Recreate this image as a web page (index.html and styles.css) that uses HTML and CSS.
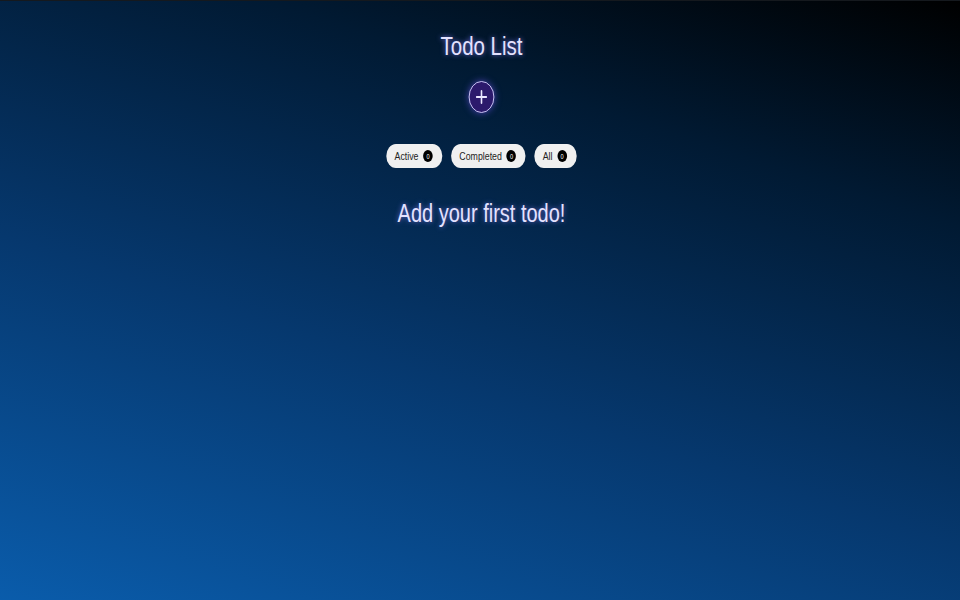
FILE: index.html
```html
<!DOCTYPE html>
<html>
<head>
<meta charset="utf-8">
<link rel="stylesheet" href="styles.css">
</head>
<body>
<main class="app">
  <h1 class="title">Todo List</h1>
  <button class="add-btn" aria-label="Add todo">
    <svg width="16" height="16" viewBox="0 0 16 16"><path d="M8 2v12M2 8h12" stroke="#eae6ff" stroke-width="2" stroke-linecap="round"/></svg>
  </button>
  <div class="filters">
    <button class="pill">Active <span class="badge">0</span></button>
    <button class="pill">Completed <span class="badge">0</span></button>
    <button class="pill">All <span class="badge">0</span></button>
  </div>
  <p class="empty">Add your first todo!</p>
</main>
</body>
</html>
```
FILE: styles.css
```css
html, body {
  margin: 0;
  height: 100%;
}
body {
  background: linear-gradient(18deg, #0a5cab 0%, #06386e 40%, #011a33 75%, #000 100%);
  font-family: "Liberation Sans", Arial, sans-serif;
  border-top: 1px solid #15191e;
  box-sizing: border-box;
}
.app {
  display: flex;
  flex-direction: column;
  align-items: center;
  padding-top: 31px;
  transform: translateX(1.5px) scaleX(0.8);
  transform-origin: center top;
}
.title {
  margin: 0;
  font-size: 25.6px;
  font-weight: normal;
  color: #e4e2ff;
  line-height: 28px;
  text-shadow: 0 0 6px rgba(140, 130, 255, 0.8);
}
.add-btn {
  margin-top: 21px;
  width: 32px;
  height: 32px;
  border-radius: 50%;
  border: 1.5px solid #d8d2ff;
  background: #2c1a6c;
  padding: 0;
  display: flex;
  align-items: center;
  justify-content: center;
  box-shadow: 0 0 8px rgba(120, 90, 255, 0.6);
}
.filters {
  display: flex;
  gap: 11px;
  margin-top: 31px;
}
.pill {
  height: 24px;
  border: none;
  border-radius: 12px;
  background: #f0f0f0;
  font-family: "Liberation Sans", Arial, sans-serif;
  font-size: 11px;
  color: #222;
  padding: 0 12px 0 10px;
  display: flex;
  align-items: center;
  gap: 6px;
}
.badge {
  width: 12px;
  height: 12px;
  border-radius: 50%;
  background: #000;
  color: #fff;
  font-size: 7px;
  display: flex;
  align-items: center;
  justify-content: center;
}
.empty {
  margin: 31px 0 0;
  font-size: 25px;
  line-height: 28px;
  color: #e4e2ff;
  text-shadow: 0 0 6px rgba(140, 130, 255, 0.7);
}
```
